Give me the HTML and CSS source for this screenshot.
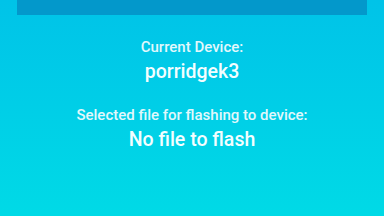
FILE: index.html
```html
<!DOCTYPE html>
<html lang="en">
<head>
    <meta charset="UTF-8">
    <meta name="viewport" content="width=device-width, initial-scale=1.0">
    <title>Flasher</title>
    <link rel="stylesheet" href="styles.css">
</head>
<body>
    <div class="topbar"></div>

    <div class="info">
        <div class="group">
            <div class="label">Current Device:</div>
            <div class="value">porridgek3</div>
        </div>

        <div class="group">
            <div class="label">Selected file for flashing to device:</div>
            <div class="value">No file to flash</div>
        </div>
    </div>
</body>
</html>
```

FILE: styles.css
```css
html, body {
    height: 100%;
}

body {
    margin: 0;
    font-family: Roboto, "Liberation Sans", sans-serif;
    background: linear-gradient(#00c3e8, #00dae6);
    color: #eafcff;
}

.topbar {
    width: 350px;
    height: 15px;
    margin: 0 auto;
    background-color: #0398cb;
}

.info {
    display: flex;
    flex-direction: column;
    align-items: center;
    gap: 22px;
    padding-top: 23px;
}

.group {
    display: flex;
    flex-direction: column;
    align-items: center;
    gap: 4px;
}

.label {
    font-size: 15px;
    line-height: 18px;
    font-weight: 500;
    color: #e2f8fc;
}

.value {
    font-size: 19.5px;
    line-height: 24px;
    font-weight: 500;
    color: #f4feff;
}
```
